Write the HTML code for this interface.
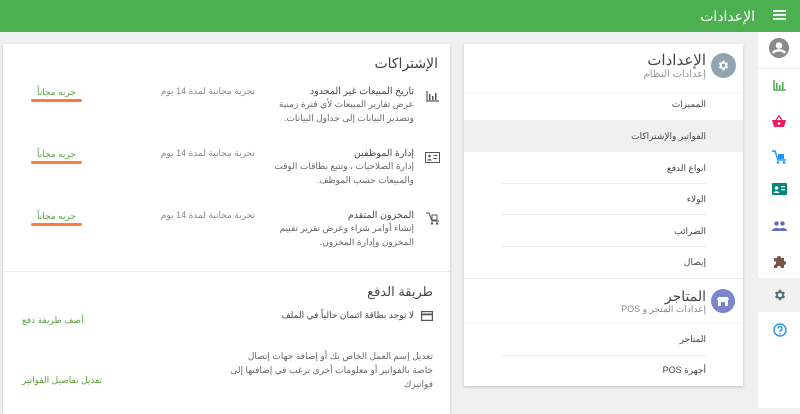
<!DOCTYPE html>
<html><head><meta charset="utf-8"><style>
*{margin:0;padding:0;box-sizing:border-box}
body{width:800px;height:408px;overflow:hidden;background:#f0f0f0;font-family:"Liberation Sans","Noto Sans CJK SC",sans-serif;color:#444;position:relative}
.a{position:absolute;white-space:nowrap}
.r{direction:rtl;text-align:right}
#top{position:absolute;left:0;top:0;width:800px;height:32px;background:#4caf50}
#side{position:absolute;left:758px;top:32px;width:42px;height:376px;background:#fff}
.card{position:absolute;background:#fff;box-shadow:0 1px 3px rgba(0,0,0,.2)}
.sep{position:absolute;height:1px;background:#ececec}
.mi{font-size:9px;color:#444}
.tr{font-size:9px;color:#888}
.btn{font-size:9px;color:#5aa03c}
.ul{position:absolute;height:3px;background:#ff7a3d;border-radius:2px;left:31px;width:51px}
.desc{font-size:9px;color:#666;line-height:14px}
</style></head><body>
<div id="top"></div>
<div class="a" style="right:45px;top:8px;color:#fff;font-size:14px">الإعدادات</div>
<svg class="a" style="left:773px;top:9px" width="14" height="12"><rect y="1" width="13" height="1.8" fill="#fff"/><rect y="5" width="13" height="1.8" fill="#fff"/><rect y="9" width="13" height="1.8" fill="#fff"/></svg>

<div id="side"></div>
<div class="sep" style="left:758px;top:68px;width:42px"></div>
<div class="a" style="left:758px;top:278px;width:42px;height:34px;background:#f0f0f0"></div>
<svg class="a" style="left:769px;top:38px" width="20" height="20"><circle cx="10" cy="10" r="10" fill="#8a8a8a"/><circle cx="10" cy="7.5" r="3.3" fill="#fff"/><path d="M4 15c2-3.5 10-3.5 12 0" stroke="#fff" stroke-width="2.6" fill="none"/></svg>
<svg class="a" style="left:773px;top:80px" width="13" height="11"><path d="M1 0v10h12" stroke="#4caf50" stroke-width="1.5" fill="none"/><rect x="3" y="3" width="1.6" height="6" fill="#4caf50"/><rect x="6" y="5" width="1.6" height="4" fill="#4caf50"/><rect x="9" y="2" width="1.6" height="7" fill="#4caf50"/></svg>
<svg class="a" style="left:772px;top:115px" width="14" height="13"><path d="M4 5l3-4 3 4" stroke="#e91e63" fill="none" stroke-width="1.3"/><path d="M0 5h14l-2 7H2z" fill="#e91e63"/><circle cx="7" cy="8.5" r="1.3" fill="#fff"/></svg>
<svg class="a" style="left:772px;top:150px" width="14" height="14"><path d="M0 1h3l3 9h8" stroke="#2196f3" stroke-width="1.4" fill="none"/><rect x="6" y="4" width="6" height="5" fill="#2196f3"/><circle cx="6" cy="12.5" r="1.3" fill="#2196f3"/><circle cx="12" cy="12.5" r="1.3" fill="#2196f3"/></svg>
<svg class="a" style="left:772px;top:183px" width="15" height="12"><rect width="15" height="12" rx="1" fill="#00897b"/><circle cx="4.5" cy="5" r="1.8" fill="#fff"/><path d="M1.5 10c1-2.5 5-2.5 6 0z" fill="#fff"/><rect x="9" y="3" width="4" height="1.3" fill="#fff"/><rect x="9" y="6" width="4" height="1.3" fill="#fff"/></svg>
<svg class="a" style="left:772px;top:221px" width="15" height="10"><circle cx="4.5" cy="2.5" r="2.2" fill="#5c6bc0"/><circle cx="10.5" cy="2.5" r="2.2" fill="#5c6bc0"/><path d="M0 10c0-4 9-4 9 0zM6 10c0-4 9-4 9 0z" fill="#5c6bc0"/></svg>
<svg class="a" style="left:773px;top:254px" width="14" height="14"><path d="M1 4h3a2 2 0 1 1 4 0h3v3a2 2 0 1 1 0 4v3H8a2 2 0 1 0-4 0H1v-3a2 2 0 1 0 0-4z" fill="#795548"/></svg>
<svg class="a" style="left:773px;top:288px" width="14" height="14" viewBox="0 0 24 24"><path fill="#546e7a" d="M19.4 13a7.5 7.5 0 0 0 0-2l2.1-1.6-2-3.5-2.5 1a7 7 0 0 0-1.7-1L15 3h-4l-.4 2.9a7 7 0 0 0-1.7 1l-2.5-1-2 3.5L6.6 11a7.5 7.5 0 0 0 0 2l-2.1 1.6 2 3.5 2.5-1a7 7 0 0 0 1.7 1L11 21h4l.4-2.9a7 7 0 0 0 1.7-1l2.5 1 2-3.5zM13 15.5a3.5 3.5 0 1 1 0-7 3.5 3.5 0 0 1 0 7z" transform="translate(-1 0)"/></svg>
<svg class="a" style="left:773px;top:323px" width="14" height="14"><circle cx="7" cy="7" r="6" stroke="#2196f3" stroke-width="1.4" fill="none"/><path d="M5 5.5a2 2 0 1 1 2.5 2c-.5.3-.5.7-.5 1.5" stroke="#2196f3" stroke-width="1.3" fill="none"/><circle cx="7" cy="10.6" r=".8" fill="#2196f3"/></svg>

<!-- right card -->
<div class="card" style="left:464px;top:44px;width:279px;height:342px"></div>
<div class="a" style="left:464px;top:120px;width:279px;height:32px;background:#f0f0f0"></div>
<svg class="a" style="left:711px;top:53px" width="25" height="25" viewBox="0 0 25 25"><circle cx="12.5" cy="12.5" r="12.5" fill="#90a4ae"/><g transform="translate(6 6) scale(.54)"><path fill="#fff" d="M19.4 13a7.5 7.5 0 0 0 0-2l2.1-1.6-2-3.5-2.5 1a7 7 0 0 0-1.7-1L15 3h-4l-.4 2.9a7 7 0 0 0-1.7 1l-2.5-1-2 3.5L6.6 11a7.5 7.5 0 0 0 0 2l-2.1 1.6 2 3.5 2.5-1a7 7 0 0 0 1.7 1L11 21h4l.4-2.9a7 7 0 0 0 1.7-1l2.5 1 2-3.5zM13 15.5a3.5 3.5 0 1 1 0-7 3.5 3.5 0 0 1 0 7z" transform="translate(-1 0)"/></g></svg>
<div class="a r" style="right:94px;top:51px;font-size:15px;color:#444">الإعدادات</div>
<div class="a r" style="right:94px;top:69px;font-size:10px;color:#999">إعدادات النظام</div>
<div class="sep" style="left:464px;top:92px;width:279px;background:#f3f3f3"></div>
<div class="a r mi" style="right:94px;top:99px">المميزات</div>
<div class="a r mi" style="right:94px;top:131px">الفواتير والإشتراكات</div>
<div class="a r mi" style="right:94px;top:163px">انواع الدفع</div>
<div class="sep" style="left:502px;top:183px;width:204px"></div>
<div class="a r mi" style="right:94px;top:194px">الولاء</div>
<div class="sep" style="left:502px;top:214px;width:204px"></div>
<div class="a r mi" style="right:94px;top:226px">الضرائب</div>
<div class="sep" style="left:502px;top:246px;width:204px"></div>
<div class="a r mi" style="right:94px;top:257px">إيصال</div>
<div class="sep" style="left:464px;top:278px;width:279px"></div>
<svg class="a" style="left:711px;top:289px" width="24" height="24"><circle cx="12" cy="12" r="12" fill="#7986cb"/><path d="M7 8h10l1 3H6z" fill="#fff"/><rect x="7" y="11" width="10" height="6" fill="#fff"/><rect x="10" y="13" width="4" height="4" fill="#7986cb"/></svg>
<div class="a r" style="right:94px;top:288px;font-size:14px;color:#444">المتاجر</div>
<div class="a r" style="right:94px;top:304px;font-size:9px;color:#888">إعدادات المتجر و POS</div>
<div class="sep" style="left:464px;top:323px;width:279px;background:#f3f3f3"></div>
<div class="a r mi" style="right:94px;top:334px">المتاجر</div>
<div class="sep" style="left:502px;top:355px;width:204px"></div>
<div class="a r mi" style="right:94px;top:365px">أجهزة POS</div>

<!-- left card -->
<div class="card" style="left:3px;top:44px;width:447px;height:370px"></div>
<div class="a r" style="right:362px;top:55px;font-size:14px;color:#444">الإشتراكات</div>

<svg class="a" style="left:426px;top:91px" width="13" height="11"><path d="M1 0v10h12" stroke="#555" stroke-width="1.2" fill="none"/><rect x="3" y="3" width="1.5" height="6" fill="#555"/><rect x="6" y="5" width="1.5" height="4" fill="#555"/><rect x="9" y="2" width="1.5" height="7" fill="#555"/></svg>
<div class="a r" style="right:386px;top:86px;font-size:9.5px;color:#444">تاريخ المبيعات غير المحدود</div>
<div class="a r desc" style="right:386px;top:97px">عرض تقارير المبيعات لأي فترة زمنية<br>وتصدير البيانات إلى جداول البيانات.</div>
<div class="a r tr" style="right:545px;top:86px">تجربة مجانية لمدة 14 يوم</div>
<div class="a btn" style="left:37px;top:87px">جربه مجاناً</div>
<div class="ul" style="top:99px"></div>

<svg class="a" style="left:425px;top:152px" width="15" height="11"><rect x=".5" y=".5" width="14" height="10" fill="none" stroke="#555"/><circle cx="4.5" cy="4" r="1.3" fill="#555"/><path d="M2 8.5c1-2 4-2 5 0z" fill="#555"/><rect x="8.5" y="3" width="4" height="1" fill="#555"/><rect x="8.5" y="6" width="4" height="1" fill="#555"/></svg>
<div class="a r" style="right:386px;top:148px;font-size:9.5px;color:#444">إدارة الموظفين</div>
<div class="a r desc" style="right:386px;top:159px">إدارة الصلاحيات ، وتتبع بطاقات الوقت<br>والمبيعات حسب الموظف.</div>
<div class="a r tr" style="right:545px;top:148px">تجربة مجانية لمدة 14 يوم</div>
<div class="a btn" style="left:37px;top:149px">جربه مجاناً</div>
<div class="ul" style="top:161px"></div>

<svg class="a" style="left:426px;top:212px" width="13" height="13"><path d="M0 1h3l3 8h7" stroke="#555" stroke-width="1.1" fill="none"/><rect x="6" y="3" width="5" height="5" fill="none" stroke="#555"/><circle cx="6" cy="11.5" r="1.2" fill="#555"/><circle cx="11" cy="11.5" r="1.2" fill="#555"/></svg>
<div class="a r" style="right:386px;top:210px;font-size:9.5px;color:#444">المخزون المتقدم</div>
<div class="a r desc" style="right:386px;top:221px">إنشاء أوامر شراء وعرض تقرير تقييم<br>المخزون وإدارة المخزون.</div>
<div class="a r tr" style="right:545px;top:210px">تجربة مجانية لمدة 14 يوم</div>
<div class="a btn" style="left:37px;top:211px">جربه مجاناً</div>
<div class="ul" style="top:223px"></div>

<div class="sep" style="left:3px;top:271px;width:447px"></div>
<div class="a r" style="right:367px;top:284px;font-size:13px;color:#444">طريقة الدفع</div>
<svg class="a" style="left:421px;top:311px" width="12" height="10"><rect x=".6" y=".6" width="10.8" height="8.8" fill="none" stroke="#555" stroke-width="1.2"/><rect x="0" y="2.5" width="12" height="1.8" fill="#555"/></svg>
<div class="a r" style="right:386px;top:310px;font-size:9px;color:#444">لا توجد بطاقة ائتمان حالياً في الملف</div>
<div class="a btn" style="left:22px;top:315px">أضف طريقة دفع</div>
<div class="a r desc" style="right:367px;top:349px;line-height:14px">تعديل إسم العمل الخاص بك أو إضافة جهات إتصال<br>خاصة بالفواتير أو معلومات أخرى ترغب في إضافتها إلى<br>فواتيرك</div>
<div class="a btn" style="left:22px;top:375px">تعديل تفاصيل الفواتير</div>
</body></html>
